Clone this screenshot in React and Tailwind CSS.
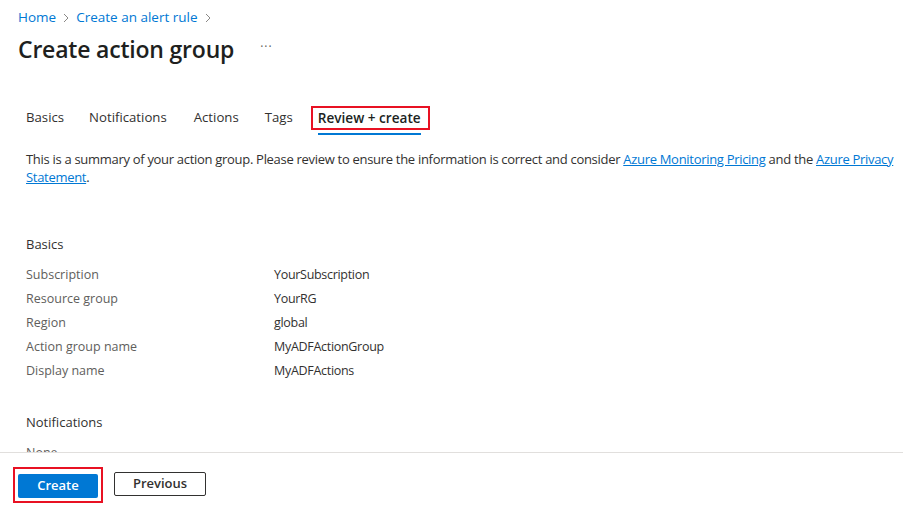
export default function App() {
  const rows = [
    ["Subscription", "YourSubscription"],
    ["Resource group", "YourRG"],
    ["Region", "global"],
    ["Action group name", "MyADFActionGroup"],
    ["Display name", "MyADFActions"],
  ];
  return (
    <div className="h-[505px] w-[903px] flex flex-col bg-white overflow-hidden text-[#323130]" style={{ fontFamily: '"Open Sans", "Noto Sans", sans-serif' }}>
      <div className="flex-1 overflow-hidden">
        <div className="pl-[18px] pt-[7px] flex items-center text-[13.5px] text-[#0078d4] h-[20px] mt-[4px]">
          <span>Home</span>
          <svg className="mx-[6px]" width="8" height="12" viewBox="0 0 8 12"><path d="M2 2l4 4-4 4" fill="none" stroke="#8a8886" strokeWidth="1"/></svg>
          <span>Create an alert rule</span>
          <svg className="mx-[6px]" width="8" height="12" viewBox="0 0 8 12"><path d="M2 2l4 4-4 4" fill="none" stroke="#8a8886" strokeWidth="1"/></svg>
        </div>
        <div className="pl-[18px] mt-[9px] flex items-center h-[32px]">
          <h1 className="text-[23px] font-semibold text-[#201f1e] tracking-[-0.2px]">Create action group</h1>
          <span className="ml-[26px] text-[12px] text-[#605e5c] tracking-[1px] -mt-[4px]">···</span>
        </div>
        <div className="flex items-center pl-[26px] mt-[39px] text-[13.2px] h-[28px]">
          <span className="mr-[25px]">Basics</span>
          <span className="mr-[27px]">Notifications</span>
          <span className="mr-[26px]">Actions</span>
          <span className="mr-[18px]">Tags</span>
          <div className="relative">
            <div className="border-2 border-[#e81123] pl-[5px] pr-[7px] h-[24px] flex items-center font-semibold text-[13.6px] text-[#201f1e]">Review + create</div>
            <div className="absolute left-[7px] right-[9px] -bottom-[5px] h-[2px] bg-[#0078d4]"></div>
          </div>
        </div>
        <p className="pl-[26px] pr-[2px] mt-[18px] text-[13px] leading-[18px] tracking-[-0.3px]">
          This is a summary of your action group. Please review to ensure the information is correct and consider{" "}
          <a className="text-[#0078d4] underline">Azure Monitoring Pricing</a> and the{" "}
          <a className="text-[#0078d4] underline">Azure Privacy Statement</a>.
        </p>
        <div className="pl-[26px] mt-[47px] text-[12.5px]">
          <div className="h-[24px] flex items-center text-[#323130] text-[13px]">Basics</div>
          <div className="mt-[6px]">
            {rows.map(([k, v]) => (
              <div key={k} className="flex h-[24px] items-center">
                <div className="w-[248px] text-[#605e5c]">{k}</div>
                <div className="text-[#323130] tracking-[-0.3px]">{v}</div>
              </div>
            ))}
          </div>
          <div className="h-[24px] flex items-center mt-[28px] text-[13px]">Notifications</div>
          <div className="h-[24px] flex items-center mt-[6px] text-[#605e5c]">None</div>
        </div>
      </div>
      <div className="h-[53px] border-t border-[#e1dfdd] flex items-start pl-[13px] pt-[14px] shrink-0 bg-white">
        <div className="border-2 border-[#e81123] p-[3px]">
          <button className="w-[80px] h-[24px] bg-[#0078d4] text-white text-[13px] font-semibold rounded-[2px]">Create</button>
        </div>
        <button className="ml-[11px] mt-[5px] w-[92px] h-[24px] border border-[#323130] text-[13px] font-semibold text-[#323130] rounded-[2px]">Previous</button>
      </div>
    </div>
  );
}
